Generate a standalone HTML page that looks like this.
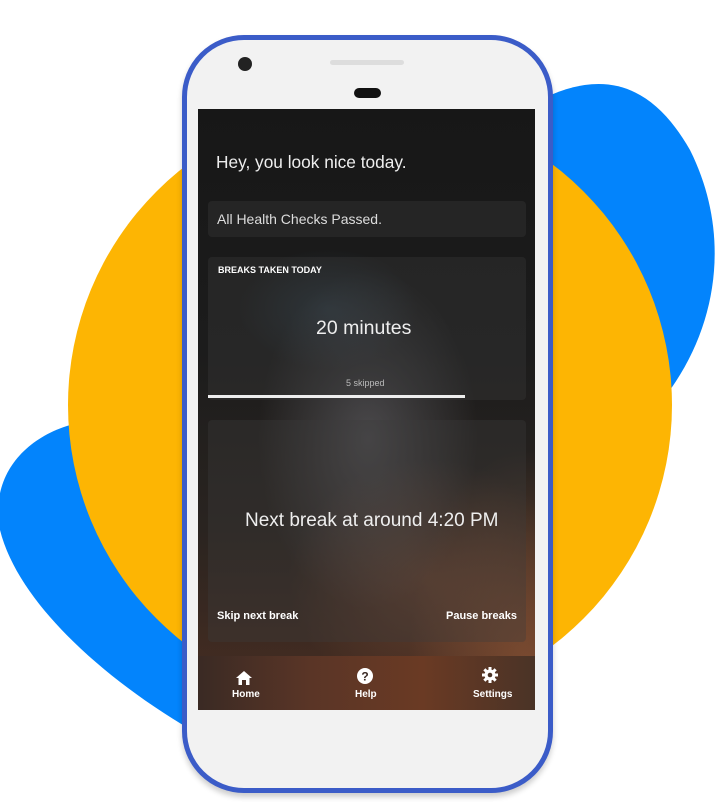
<!DOCTYPE html>
<html><head><meta charset="utf-8"><style>
*{margin:0;padding:0;box-sizing:border-box}
body{width:718px;height:802px;background:#fff;position:relative;overflow:hidden;font-family:"Liberation Sans",sans-serif}
.bg{position:absolute;left:0;top:0}
.phone{position:absolute;left:182px;top:35px;width:371px;height:758px;border:5px solid #3b5cc8;border-radius:62px;background:#f2f2f2;box-shadow:0 4px 6px rgba(0,0,0,.2)}
.screen{position:absolute;left:198px;top:109px;width:337px;height:601px;overflow:hidden;
background:
radial-gradient(ellipse 120px 220px at 330px 560px,rgba(170,100,60,.55),transparent),
radial-gradient(ellipse 110px 170px at 170px 330px,rgba(150,150,160,.35),transparent),
radial-gradient(ellipse 140px 120px at 230px 470px,rgba(150,90,60,.45),transparent),
radial-gradient(ellipse 90px 60px at 130px 200px,rgba(60,90,110,.35),transparent),
linear-gradient(#171717,#1c1c1c 40%,#2a2420 70%,#4a2e22);color:#eee}
.card{position:absolute;background:rgba(60,60,60,.35);border-radius:4px}
.t{position:absolute;white-space:nowrap}
.nav{position:absolute;left:0;top:547px;width:337px;height:54px;background:linear-gradient(90deg,#3a2a24,#5a3526,#6a3a24,#4a3326)}
.nav span{position:absolute;font-size:10px;font-weight:bold;color:#fff;top:33px}
</style></head><body>
<svg class="bg" width="718" height="802">
<path d="M540 100 C600 70 650 80 690 150 C730 230 720 320 670 390 L540 390 Z" fill="#0384fc"/>
<path d="M70 425 C20 440 -10 480 0 530 C20 610 120 690 200 735 L230 420 Z" fill="#0384fc"/>
<circle cx="370" cy="405" r="302" fill="#fdb503"/>
</svg>
<div class="phone"></div>
<div style="position:absolute;left:238px;top:57px;width:14px;height:14px;border-radius:50%;background:#222"></div>
<div style="position:absolute;left:330px;top:60px;width:74px;height:5px;border-radius:3px;background:#ddd"></div>
<div style="position:absolute;left:354px;top:88px;width:27px;height:10px;border-radius:5px;background:#111"></div>
<div class="screen">
<div class="t" style="left:18px;top:43px;font-size:17.3px;color:#eee">Hey, you look nice today.</div>
<div class="card" style="left:10px;top:92px;width:318px;height:36px"></div>
<div class="t" style="left:19px;top:102px;font-size:14px;color:#ddd">All Health Checks Passed.</div>
<div class="card" style="left:10px;top:148px;width:318px;height:143px"></div>
<div class="t" style="left:20px;top:156px;font-size:9px;font-weight:bold;color:#fff">BREAKS TAKEN TODAY</div>
<div class="t" style="left:118px;top:208px;font-size:19.5px;color:#eee">20 minutes</div>
<div class="t" style="left:148px;top:269px;font-size:9px;color:#bbb">5 skipped</div>
<div style="position:absolute;left:10px;top:286px;width:257px;height:3px;background:#eee"></div>
<div class="card" style="left:10px;top:311px;width:318px;height:222px"></div>
<div class="t" style="left:47px;top:401px;font-size:19px;color:#eee">Next break at around 4:20 PM</div>
<div class="t" style="left:19px;top:501px;font-size:11px;font-weight:bold;color:#fff">Skip next break</div>
<div class="t" style="left:248px;top:501px;font-size:11px;font-weight:bold;color:#fff">Pause breaks</div>
<div class="nav">
<svg style="position:absolute;left:38px;top:15px" width="16" height="14" viewBox="0 0 16 14"><path d="M8 0 L16 7 L13.5 7 L13.5 14 L10 14 L10 9 L6 9 L6 14 L2.5 14 L2.5 7 L0 7Z" fill="#fff"/></svg>
<span style="left:34px">Home</span>
<svg style="position:absolute;left:159px;top:12px" width="16" height="16" viewBox="0 0 16 16"><circle cx="8" cy="8" r="8" fill="#fff"/><text x="8" y="12.5" font-size="12" font-weight="bold" text-anchor="middle" fill="#3a2a24" font-family="Liberation Sans">?</text></svg>
<span style="left:157px">Help</span>
<svg style="position:absolute;left:284px;top:11px" width="16" height="16" viewBox="0 0 16 16"><g fill="#fff"><circle cx="8" cy="8" r="5.5"/><rect x="6.5" y="0" width="3" height="16"/><rect x="0" y="6.5" width="16" height="3"/><rect x="6.5" y="0" width="3" height="16" transform="rotate(45 8 8)"/><rect x="6.5" y="0" width="3" height="16" transform="rotate(-45 8 8)"/></g><circle cx="8" cy="8" r="2.3" fill="#4a3326"/></svg>
<span style="left:275px">Settings</span>
</div>
</div>
</body></html>
